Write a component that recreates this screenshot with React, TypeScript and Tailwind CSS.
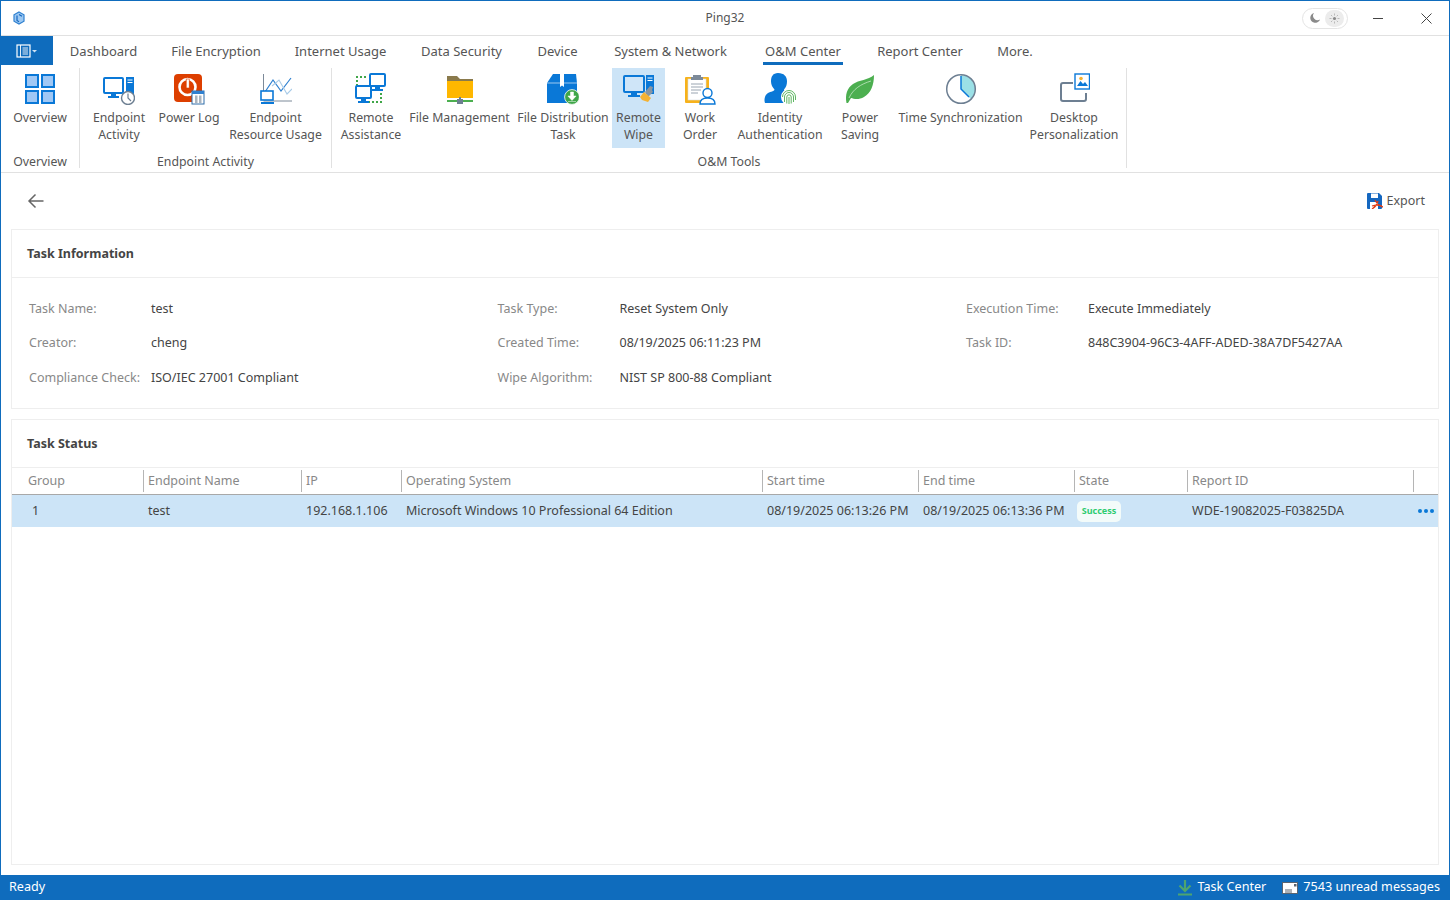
import React from "react";

const Box = ({ children }: { children: React.ReactNode }) => (
  <svg width="32" height="32" viewBox="0 0 32 32" className="block">{children}</svg>
);
const B = "#0a78d7";

const OverviewIcon = () => (
  <Box>
    {[[2, 2], [18, 2], [2, 18], [18, 18]].map(([x, y], i) => (
      <rect key={i} x={x} y={y} width="12" height="12" fill="#a0c8f5" stroke={B} strokeWidth="2" />
    ))}
  </Box>
);
const EndpointIcon = () => (
  <Box>
    <rect x="1" y="5" width="19" height="15" rx="1" fill="#fff" stroke={B} strokeWidth="2" />
    <path d="M8 21h5v2h3v2H5v-2h3z" fill={B} />
    <rect x="23" y="4" width="8" height="17" fill={B} />
    <path d="M24.500 7h5M24.500 9.500h5" stroke="#fff" strokeWidth="1" />
    <circle cx="25" cy="25" r="6.500" fill="#fff" stroke="#6d7f92" strokeWidth="1.400" />
    <path d="M25 20.500V25l3 3" fill="none" stroke="#6d7f92" strokeWidth="1.200" />
  </Box>
);
const PowerLogIcon = () => (
  <Box>
    <rect x="1" y="1" width="28" height="28" rx="4" fill="#dd3f00" />
    <circle cx="14.500" cy="14" r="8" fill="none" stroke="#fff" strokeWidth="2.600" />
    <rect x="13.200" y="6" width="3" height="9" fill="#fff" stroke="#dd3f00" strokeWidth="0.600" />
    <rect x="19" y="18" width="12" height="13" fill="#fff" stroke="#2f6da8" strokeWidth="1" />
    <rect x="19" y="18" width="12" height="3" fill="#2f80d0" />
    <path d="M22 22.500h2.500V30H22zM26 22.500h2.500V30H26z" fill="#a9b4bf" />
  </Box>
);
const ResourceIcon = () => (
  <Box>
    <path d="M3.500 1v24.500M3.500 28h29" fill="none" stroke="#7c8a99" strokeWidth="1" />
    <path d="M5 19l8-12 8 11 10-13" fill="none" stroke="#2f80d0" strokeWidth="1.200" />
    <path d="M12 13l7-6 8 14 5-5" fill="none" stroke="#a8cbe8" strokeWidth="1.100" />
    <rect x="1" y="18" width="12" height="9" fill="#fff" stroke={B} strokeWidth="1.600" />
    <path d="M1 29h13v2H1z" fill={B} />
  </Box>
);
const RemoteIcon = () => (
  <Box>
    <path d="M2 13V4h10M26 16v13H14" fill="none" stroke="#3fa648" strokeWidth="2" strokeDasharray="2 2" />
    <rect x="15" y="1" width="15" height="12" rx="1" fill="#fff" stroke={B} strokeWidth="2" />
    <path d="M20 14h5v2h3v2H17v-2h3z" fill={B} />
    <rect x="1" y="13" width="15" height="12" rx="1" fill="#fff" stroke={B} strokeWidth="2" />
    <path d="M6 26h5v2h3v2H3v-2h3z" fill={B} />
  </Box>
);
const FolderIcon = () => (
  <Box>
    <path d="M3 3h10l3 3h13v3H3z" fill="#8a7a4c" />
    <rect x="3" y="8" width="26" height="17" fill="#ffb700" />
    <rect x="3" y="27" width="26" height="2" fill="#4caf50" />
    <rect x="15" y="24" width="2" height="3" fill="#6d7f92" />
    <rect x="13" y="26" width="6" height="5" fill="#6d7f92" />
  </Box>
);
const PackageIcon = () => (
  <Box>
    <path d="M0 10l6-9h23l1 9v20H0z" fill={B} />
    <path d="M13 1h4v13l-2-1.500L13 14z" fill="#fff" />
    <path d="M0 10h30" stroke="#fff" strokeWidth="0.600" />
    <circle cx="25" cy="24" r="7.400" fill="#3fa648" stroke="#fff" strokeWidth="0.800" />
    <path d="M23.500 19h3v4h2.600L25 27.500 20.900 23h2.600zM21 28.500h8" fill="#fff" stroke="#fff" strokeWidth="0.500" />
  </Box>
);
const WipeIcon = () => (
  <Box>
    <rect x="1" y="3" width="20" height="16" rx="1" fill="#cfe5f8" stroke={B} strokeWidth="2" />
    <path d="M8 20h6v2h3v2H5v-2h3z" fill={B} />
    <rect x="23" y="2" width="8" height="19" fill={B} />
    <path d="M24.500 5h5M24.500 7.500h5" stroke="#fff" strokeWidth="1" />
    <path d="M22 19l5-6 3 1-1 3 1 2-5 5z" fill="#8795a3" />
    <path d="M17 24l4-5 7 6-3 4-6-2z" fill="#f4b233" />
  </Box>
);
const WorkIcon = () => (
  <Box>
    <rect x="1" y="4" width="24" height="26" rx="1" fill="#f7b21b" />
    <rect x="4" y="6" width="18" height="21" fill="#fff" stroke="#d9dde2" strokeWidth="0.600" />
    <path d="M9 2h8v2h2v3H7V4h2z" fill="#7d8a99" />
    <path d="M7 11h12M7 14h12M7 17h10M7 20h7" stroke="#9aa5b1" strokeWidth="1" />
    <circle cx="23.500" cy="20" r="4.500" fill="#fff" stroke={B} strokeWidth="1.400" />
    <path d="M16 31c0-5 3-6 7.500-6s7.500 1 7.500 6z" fill="#fff" stroke={B} strokeWidth="1.400" />
  </Box>
);
const IdentityIcon = () => (
  <Box>
    <path d="M14 0c6 0 9 3.500 9 8.500 0 3-1 6-3 8 0 2 1.500 3 3 3.500v10H1c-1-3-.5-8 3-10 3-1.500 6-1.500 6.500-3.500-2-2-3.500-5-3.500-8C7 3.500 9 0 14 0z" fill={B} />
    <circle cx="25" cy="24" r="8" fill="#fff" />
    <g fill="none" stroke="#4caf50" strokeWidth="0.900">
      <path d="M18.500 24a6.500 6.500 0 0 1 13 0v3" />
      <path d="M20.500 29v-5a4.500 4.500 0 0 1 9 0v5" />
      <path d="M22.800 30.500V24a2.200 2.200 0 0 1 4.400 0v6.500" />
      <path d="M25 24v7" />
    </g>
  </Box>
);
const LeafIcon = () => (
  <Box>
    <path d="M2.500 30C1 22 3 15 9 11c6-4 15-4 21-9 0 10-3 18-10 22-5 3-10 2-13 1l-3 5z" fill="#4caf50" />
    <path d="M5 25C9 16 17 11 27 8" fill="none" stroke="#c3e6c4" strokeWidth="0.800" />
  </Box>
);
const ClockIcon = () => (
  <Box>
    <path d="M16 16V2a14 14 0 0 1 9.900 23.900z" fill="#9be0e6" />
    <circle cx="16" cy="16" r="14.300" fill="none" stroke="#6d7f92" strokeWidth="1.500" />
    <path d="M16 3v13l8 8" fill="none" stroke={B} strokeWidth="1.500" />
  </Box>
);
const DesktopIcon = () => (
  <Box>
    <path d="M15 10H5a2 2 0 0 0-2 2v14a2 2 0 0 0 2 2h21a2 2 0 0 0 2-2v-6" fill="none" stroke="#6d7f92" strokeWidth="2" />
    <rect x="17" y="1" width="14.500" height="15" fill="#fff" stroke={B} strokeWidth="1.400" />
    <path d="M19 13l3.500-5 2.500 3 2-2 3 4z" fill={B} />
    <circle cx="23" cy="5.500" r="1.800" fill="#f4b233" />
  </Box>
);

const Item = ({ w, lines, icon, active }: { w: string; lines: string[]; icon: React.ReactNode; active?: boolean }) => (
  <div className={`${w} h-20 flex flex-col items-center pt-[5px] shrink-0 ${active ? "bg-[#cce4f7]" : ""}`}>
    {icon}
    <div className="mt-[4px] text-center text-[12.3px] leading-[17px] text-[#555] whitespace-nowrap">
      {lines.map((l) => (
        <div key={l}>{l}</div>
      ))}
    </div>
  </div>
);

const Group = ({ className, inner, label, children }: { className: string; inner: string; label: string; children: React.ReactNode }) => (
  <div className={`flex flex-col border-r border-[#e1e1e1] h-[100px] ${className}`}>
    <div className={`flex ${inner}`}>{children}</div>
    <div className="mt-[5px] text-center text-[12.3px] leading-[17px] text-[#555]">{label}</div>
  </div>
);

const tabs = [
  { n: "Dashboard", w: "w-[67px]" },
  { n: "File Encryption", w: "w-[90px]" },
  { n: "Internet Usage", w: "w-[91px]" },
  { n: "Data Security", w: "w-[83px]" },
  { n: "Device", w: "w-[41px]" },
  { n: "System & Network", w: "w-[117px]" },
  { n: "O&M Center", w: "w-[80px]" },
  { n: "Report Center", w: "w-[86px]" },
  { n: "More.", w: "w-[36px]" },
];

const rows = [
  [["Task Name:", "test"], ["Task Type:", "Reset System Only"], ["Execution Time:", "Execute Immediately"]],
  [["Creator:", "cheng"], ["Created Time:", "08/19/2025 06:11:23 PM"], ["Task ID:", "848C3904-96C3-4AFF-ADED-38A7DF5427AA"]],
  [["Compliance Check:", "ISO/IEC 27001 Compliant"], ["Wipe Algorithm:", "NIST SP 800-88 Compliant"], ["", ""]],
];

const cols = [
  { n: "Group", w: "w-[132px]", pl: "pl-4" },
  { n: "Endpoint Name", w: "w-[158px]" },
  { n: "IP", w: "w-[100px]" },
  { n: "Operating System", w: "w-[361px]" },
  { n: "Start time", w: "w-[156px]" },
  { n: "End time", w: "w-[156px]" },
  { n: "State", w: "w-[113px]" },
  { n: "Report ID", w: "w-[226px]" },
];

export default function App() {
  return (
    <div className="h-[900px] w-[1450px] flex flex-col overflow-hidden bg-white border-x border-t border-[#0f6cbd] text-[#444] font-['Noto_Sans','Liberation_Sans',sans-serif] text-[12.5px]">
      {/* title bar */}
      <div className="h-[35px] shrink-0 flex items-center border-b border-[#e1e1e1]">
        <div className="flex-1 basis-0 flex items-center">
          <svg width="14" height="14" viewBox="0 0 14 14" className="ml-[11px]">
            <path d="M7 1l5 2.800v6.400L7 13l-5-2.800V3.800z" fill="#9cc8f2" stroke="#2f80d0" strokeWidth="1.200" />
            <path d="M5 4.500v5l2 1.200M7 3.500l3 1.700" fill="none" stroke="#1467c0" strokeWidth="1.200" />
          </svg>
        </div>
        <div className="text-center text-[#555] text-[12px]">Ping32</div>
        <div className="flex-1 basis-0 flex items-center justify-end">
          <div className="flex items-center w-[46px] h-[21px] rounded-full border border-[#e4e4e4] mr-[25px]">
            <svg width="12" height="12" viewBox="0 0 12 12" className="ml-[6px]">
              <path d="M5 1a5 5 0 1 0 6 6.500A4.500 4.500 0 0 1 5 1z" fill="#8a8a8a" />
            </svg>
            <div className="ml-[4px] w-[19px] h-[17px] rounded-full bg-[#ececec] flex items-center justify-center">
              <svg width="11" height="11" viewBox="0 0 11 11">
                <circle cx="5.500" cy="5.500" r="1.600" fill="#8a8a8a" />
                <path d="M5.500 0.500v2M5.500 8.500v2M0.500 5.500h2M8.500 5.500h2M2 2l1.300 1.300M7.700 7.700L9 9M2 9l1.300-1.300M7.700 3.300L9 2" stroke="#a5a5a5" strokeWidth="0.700" />
              </svg>
            </div>
          </div>
          <svg width="11" height="11" viewBox="0 0 11 11" className="mr-[37px]">
            <path d="M0 5.500h10" stroke="#444" strokeWidth="1" />
          </svg>
          <svg width="11" height="11" viewBox="0 0 11 11" className="mr-[17px]">
            <path d="M0.500 0.500l10 10M10.500 0.500l-10 10" stroke="#444" strokeWidth="1" />
          </svg>
        </div>
      </div>

      {/* tabs */}
      <div className="h-[29px] shrink-0 flex items-stretch">
        <div className="-ml-px w-[53px] bg-[#0f6cbd] flex items-center justify-center">
          <svg width="22" height="14" viewBox="0 0 22 14">
            <rect x="1" y="1" width="13" height="12" fill="none" stroke="#fff" strokeWidth="1.200" />
            <path d="M4.500 1v12M6.500 4h5.500M6.500 6h5.500M6.500 8h5.500M6.500 10h5.500" stroke="#fff" strokeWidth="0.900" />
            <path d="M16 6h5l-2.500 2.500z" fill="#cfe2f3" />
          </svg>
        </div>
        <div className="flex gap-[34px] ml-[17px]">
          {tabs.map((t) => (
            <div key={t.n} className={`${t.w} flex items-center justify-center text-[13px] text-[#555] whitespace-nowrap pt-[5px] border-b-[3px] ${t.n === "O&M Center" ? "border-[#0f6cbd]" : "border-transparent"}`}>
              {t.n}
            </div>
          ))}
        </div>
      </div>

      {/* ribbon */}
      <div className="h-[108px] shrink-0 flex items-start pt-[3px] border-b border-[#e1e1e1]">
        <Group className="w-[79px]" inner="justify-center" label="Overview">
          <Item w="w-[61px]" lines={["Overview"]} icon={<OverviewIcon />} />
        </Group>
        <Group className="w-[252px]" inner="pl-1" label="Endpoint Activity">
          <Item w="w-[70px]" lines={["Endpoint", "Activity"]} icon={<EndpointIcon />} />
          <Item w="w-[70px]" lines={["Power Log"]} icon={<PowerLogIcon />} />
          <Item w="w-[103px]" lines={["Endpoint", "Resource Usage"]} icon={<ResourceIcon />} />
        </Group>
        <Group className="w-[795px]" inner="pl-[5px]" label="O&M Tools">
          <Item w="w-[68px]" lines={["Remote", "Assistance"]} icon={<RemoteIcon />} />
          <Item w="w-[109px]" lines={["File Management"]} icon={<FolderIcon />} />
          <Item w="w-[98px]" lines={["File Distribution", "Task"]} icon={<PackageIcon />} />
          <Item w="w-[53px]" lines={["Remote", "Wipe"]} icon={<WipeIcon />} active />
          <Item w="w-[70px]" lines={["Work", "Order"]} icon={<WorkIcon />} />
          <Item w="w-[90px]" lines={["Identity", "Authentication"]} icon={<IdentityIcon />} />
          <Item w="w-[70px]" lines={["Power", "Saving"]} icon={<LeafIcon />} />
          <Item w="w-[131px]" lines={["Time Synchronization"]} icon={<ClockIcon />} />
          <Item w="w-[96px]" lines={["Desktop", "Personalization"]} icon={<DesktopIcon />} />
        </Group>
      </div>

      {/* content */}
      <div className="flex-1 min-h-0 flex flex-col px-[10px] pb-[10px]">
        <div className="h-[56px] shrink-0 flex items-center justify-between pl-[16px] pr-[14px]">
          <svg width="18" height="16" viewBox="0 0 18 16">
            <path d="M16.500 8H2M8.500 1.500L2 8l6.500 6.500" fill="none" stroke="#666" strokeWidth="1.500" />
          </svg>
          <div className="flex items-center gap-1 text-[#555]">
            <svg width="16" height="16" viewBox="0 0 16 16">
              <path d="M0 1a1 1 0 0 1 1-1h11l3 3v12a1 1 0 0 1-1 1H1a1 1 0 0 1-1-1z" fill="#1467c0" />
              <rect x="4" y="0.500" width="7" height="4.500" fill="#fff" />
              <rect x="3" y="9" width="8" height="7" fill="#fff" />
              <path d="M8 7c2 4 4 6 8 7M11 8c-1 4-3 6-6 8M5 13c3-1 7-1 10 0" fill="none" stroke="#e03c14" strokeWidth="1.300" />
            </svg>
            Export
          </div>
        </div>

        <section className="h-[180px] shrink-0 border border-[#eeeeee]">
          <h2 className="h-[48px] flex items-center pl-[15px] pt-[2px] font-bold text-[12.5px] text-[#444] border-b border-[#eeeeee]">Task Information</h2>
          <div className="pt-[14px] pl-[17px]">
            {rows.map((row, i) => (
              <div key={i} className="flex h-[34.5px] items-center">
                {row.map(([k, v], j) => (
                  <div key={j} className="w-[468.5px] flex">
                    <span className="w-[122px] text-[#888] whitespace-nowrap">{k}</span>
                    <span className="text-[#444] whitespace-nowrap">{v}</span>
                  </div>
                ))}
              </div>
            ))}
          </div>
        </section>

        <section className="flex-1 mt-[10px] border border-[#eeeeee]">
          <h2 className="h-[48px] flex items-center pl-[15px] pt-[2px] font-bold text-[12.5px] text-[#444] border-b border-[#eeeeee]">Task Status</h2>
          <div className="flex h-[27px] border-b border-[#a8a8a8] items-stretch">
            {cols.map((c) => (
              <div key={c.n} className={`${c.w} flex items-center text-[#888] ${c.pl ?? "pl-1"} my-[2px] border-r border-[#b5b5b5] shrink-0`}>
                {c.n}
              </div>
            ))}
          </div>
          <div className="flex h-[32px] items-center bg-[#cce4f7] text-[#444] whitespace-nowrap">
            <div className="w-[132px] pl-5">1</div>
            <div className="w-[158px] pl-1">test</div>
            <div className="w-[100px] pl-1">192.168.1.106</div>
            <div className="w-[361px] pl-1">Microsoft Windows 10 Professional 64 Edition</div>
            <div className="w-[156px] pl-1">08/19/2025 06:13:26 PM</div>
            <div className="w-[156px] pl-1">08/19/2025 06:13:36 PM</div>
            <div className="w-[113px] pl-[2px] flex">
              <span className="inline-flex items-center justify-center w-[44px] h-[21px] rounded-[5px] bg-[#f3fbfa] text-[#2ecc71] text-[9px] font-bold">Success</span>
            </div>
            <div className="w-[226px] pl-1">WDE-19082025-F03825DA</div>
            <div className="flex-1 flex justify-end gap-[2px] pr-[4px]">
              <span className="w-1 h-1 rounded-full bg-[#0a78d7]" />
              <span className="w-1 h-1 rounded-full bg-[#0a78d7]" />
              <span className="w-1 h-1 rounded-full bg-[#0a78d7]" />
            </div>
          </div>
        </section>
      </div>

      {/* status bar */}
      <div className="-mx-px h-[25px] shrink-0 bg-[#0f6cbd] flex items-center text-white text-[12.6px] pl-[9px] pr-[10px]">
        <span>Ready</span>
        <svg width="16" height="16" viewBox="0 0 16 16" className="ml-auto">
          <path d="M8 0v11M2.500 5.500L8 11l5.500-5.500" fill="none" stroke="#4ea56f" strokeWidth="2.200" />
          <rect x="1" y="13.500" width="14" height="2" fill="#4ea56f" />
        </svg>
        <span className="ml-[5px]">Task Center</span>
        <svg width="16" height="12" viewBox="0 0 16 12" className="ml-4">
          <rect x="0.500" y="0.500" width="15" height="11" fill="#fff" stroke="#5a6470" />
          <path d="M3 8h7M3 10h7" stroke="#5a6470" strokeWidth="1" />
          <rect x="12" y="2" width="2.500" height="2.500" fill="#5a6470" />
        </svg>
        <span className="ml-[5px]">7543 unread messages</span>
      </div>
    </div>
  );
}
